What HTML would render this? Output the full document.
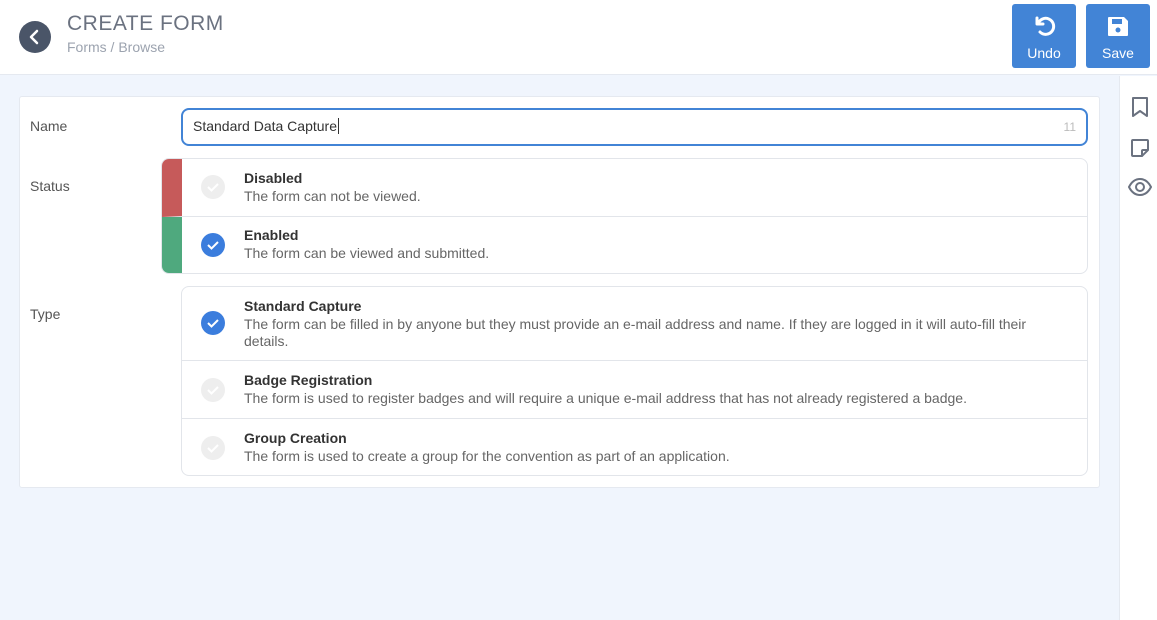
<!DOCTYPE html><html><head><style>
*{box-sizing:border-box;margin:0;padding:0}
body{width:1157px;height:620px;background:#f0f5fd;font-family:"Liberation Sans",sans-serif;position:relative;overflow:hidden;color:#333}
.hdr{position:absolute;left:0;top:0;width:1157px;height:75px;background:#fff;border-bottom:1px solid #e5e9f0}
.back{position:absolute;left:19px;top:21px;width:32px;height:32px;border-radius:50%;background:#4a5568}
.t{position:absolute;left:67px;top:12px;font-size:21px;color:#6b7280;letter-spacing:.5px}
.bc{position:absolute;left:67px;top:39px;font-size:14px;color:#9ca3af}
.btn{position:absolute;top:4px;width:64px;height:64px;background:#4284d6;border-radius:3px;color:#fff;font-size:14px;text-align:center}
.btn svg{position:absolute;left:20px;top:10px}
.btn span{position:absolute;left:0;right:0;top:41px}
.side{position:absolute;left:1119px;top:76px;width:38px;height:544px;background:#fff;border-left:1px solid #e5e9f0}
.card{position:absolute;left:19px;top:96px;width:1081px;height:392px;background:#fff;border:1px solid #e5e9f0;border-radius:3px}
.lbl{position:absolute;left:30px;font-size:14px;color:#555}
.inp{position:absolute;left:181px;top:108px;width:907px;height:38px;border:2px solid #4284d6;border-radius:8px;font-size:14px;padding:8px 10px;color:#333}
.cnt{position:absolute;right:10px;top:10px;font-size:12px;color:#bbb}
.grp{position:absolute;border:1px solid #e2e5ea;border-radius:8px;overflow:hidden;background:#fff}
.row{position:relative;border-bottom:1px solid #e2e5ea}
.row:last-child{border-bottom:none}
.row b{position:absolute;left:62px;font-size:14px;font-weight:bold;color:#333}
.row p{position:absolute;left:62px;right:20px;font-size:14px;color:#666;line-height:17px}
.chk{position:absolute;left:19px;width:24px;height:24px;border-radius:50%;background:#eee}
.chk.on{background:#3b7ddd}
.chk svg{position:absolute;left:6px;top:7px}
</style></head><body>
<div class="hdr">
<div class="back"><svg width="32" height="32"><path d="M18 10l-6 6 6 6" stroke="#fff" stroke-width="2.5" fill="none" stroke-linecap="round" stroke-linejoin="round"/></svg></div>
<div class="t">CREATE FORM</div>
<div class="bc">Forms / Browse</div>
<div class="btn" style="left:1012px"><svg width="24" height="24" viewBox="0 0 24 24"><path d="M5 4v6h6" stroke="#fff" stroke-width="3" fill="none" stroke-linecap="round" stroke-linejoin="round"/><path d="M6 10a8 8 0 1 1 2 8" stroke="#fff" stroke-width="3" fill="none" stroke-linecap="round"/></svg><span>Undo</span></div>
<div class="btn" style="left:1086px"><svg width="24" height="24" viewBox="0 0 24 24"><path d="M3 3h15l4 4v14a1 1 0 0 1-1 1H3a1 1 0 0 1-1-1V4a1 1 0 0 1 1-1z" fill="#fff"/><rect x="6" y="5" width="10" height="5" fill="#4284d6"/><circle cx="12" cy="16" r="2.5" fill="#4284d6"/></svg><span>Save</span></div>
</div>
<div class="side">
<svg style="position:absolute;left:11px;top:20px" width="18" height="22" viewBox="0 0 18 22"><path d="M2 2h14v18l-7-5-7 5z" stroke="#6b7280" stroke-width="2" fill="none" stroke-linejoin="round"/></svg>
<svg style="position:absolute;left:10px;top:62px" width="20" height="20" viewBox="0 0 20 20"><path d="M3 2h14a1 1 0 0 1 1 1v9l-6 6H3a1 1 0 0 1-1-1V3a1 1 0 0 1 1-1zM12 18v-5a1 1 0 0 1 1-1h5" stroke="#6b7280" stroke-width="2" fill="none" stroke-linejoin="round"/></svg>
<svg style="position:absolute;left:8px;top:102px" width="24" height="18" viewBox="0 0 24 18"><path d="M1 9C4 3 8 1 12 1s8 2 11 8c-3 6-7 8-11 8S4 15 1 9z" stroke="#6b7280" stroke-width="2" fill="none"/><circle cx="12" cy="9" r="4" stroke="#6b7280" stroke-width="2" fill="none"/></svg>
</div>
<div class="card"></div>
<div class="lbl" style="top:118px">Name</div>
<div class="lbl" style="top:178px">Status</div>
<div class="lbl" style="top:306px">Type</div>
<div class="inp">Standard Data Capture<span style="border-left:1px solid #333;margin-left:1px"></span><span class="cnt">11</span></div>
<div class="grp" style="left:161px;top:158px;width:927px;height:116px">
<div class="row" style="height:58px;border-left:20px solid #c65a5a"><div class="chk" style="top:16px;left:19px"><svg width="12" height="10"><path d="M1 5l3.5 3.5L11 2" stroke="#fff" stroke-width="2" fill="none"/></svg></div><b style="top:11px">Disabled</b><p style="top:29px">The form can not be viewed.</p></div>
<div class="row" style="height:57px;border-left:20px solid #4fa97e"><div class="chk on" style="top:16px;left:19px"><svg width="12" height="10"><path d="M1 5l3.5 3.5L11 2" stroke="#fff" stroke-width="2" fill="none"/></svg></div><b style="top:10px">Enabled</b><p style="top:28px">The form can be viewed and submitted.</p></div>
</div>
<div class="grp" style="left:181px;top:286px;width:907px;height:190px">
<div class="row" style="height:74px"><div class="chk on" style="top:24px"><svg width="12" height="10"><path d="M1 5l3.5 3.5L11 2" stroke="#fff" stroke-width="2" fill="none"/></svg></div><b style="top:11px">Standard Capture</b><p style="top:29px">The form can be filled in by anyone but they must provide an e-mail address and name. If they are logged in it will auto-fill their details.</p></div>
<div class="row" style="height:58px"><div class="chk" style="top:17px"><svg width="12" height="10"><path d="M1 5l3.5 3.5L11 2" stroke="#fff" stroke-width="2" fill="none"/></svg></div><b style="top:11px">Badge Registration</b><p style="top:29px">The form is used to register badges and will require a unique e-mail address that has not already registered a badge.</p></div>
<div class="row" style="height:58px"><div class="chk" style="top:17px"><svg width="12" height="10"><path d="M1 5l3.5 3.5L11 2" stroke="#fff" stroke-width="2" fill="none"/></svg></div><b style="top:11px">Group Creation</b><p style="top:29px">The form is used to create a group for the convention as part of an application.</p></div>
</div>
</body></html>
